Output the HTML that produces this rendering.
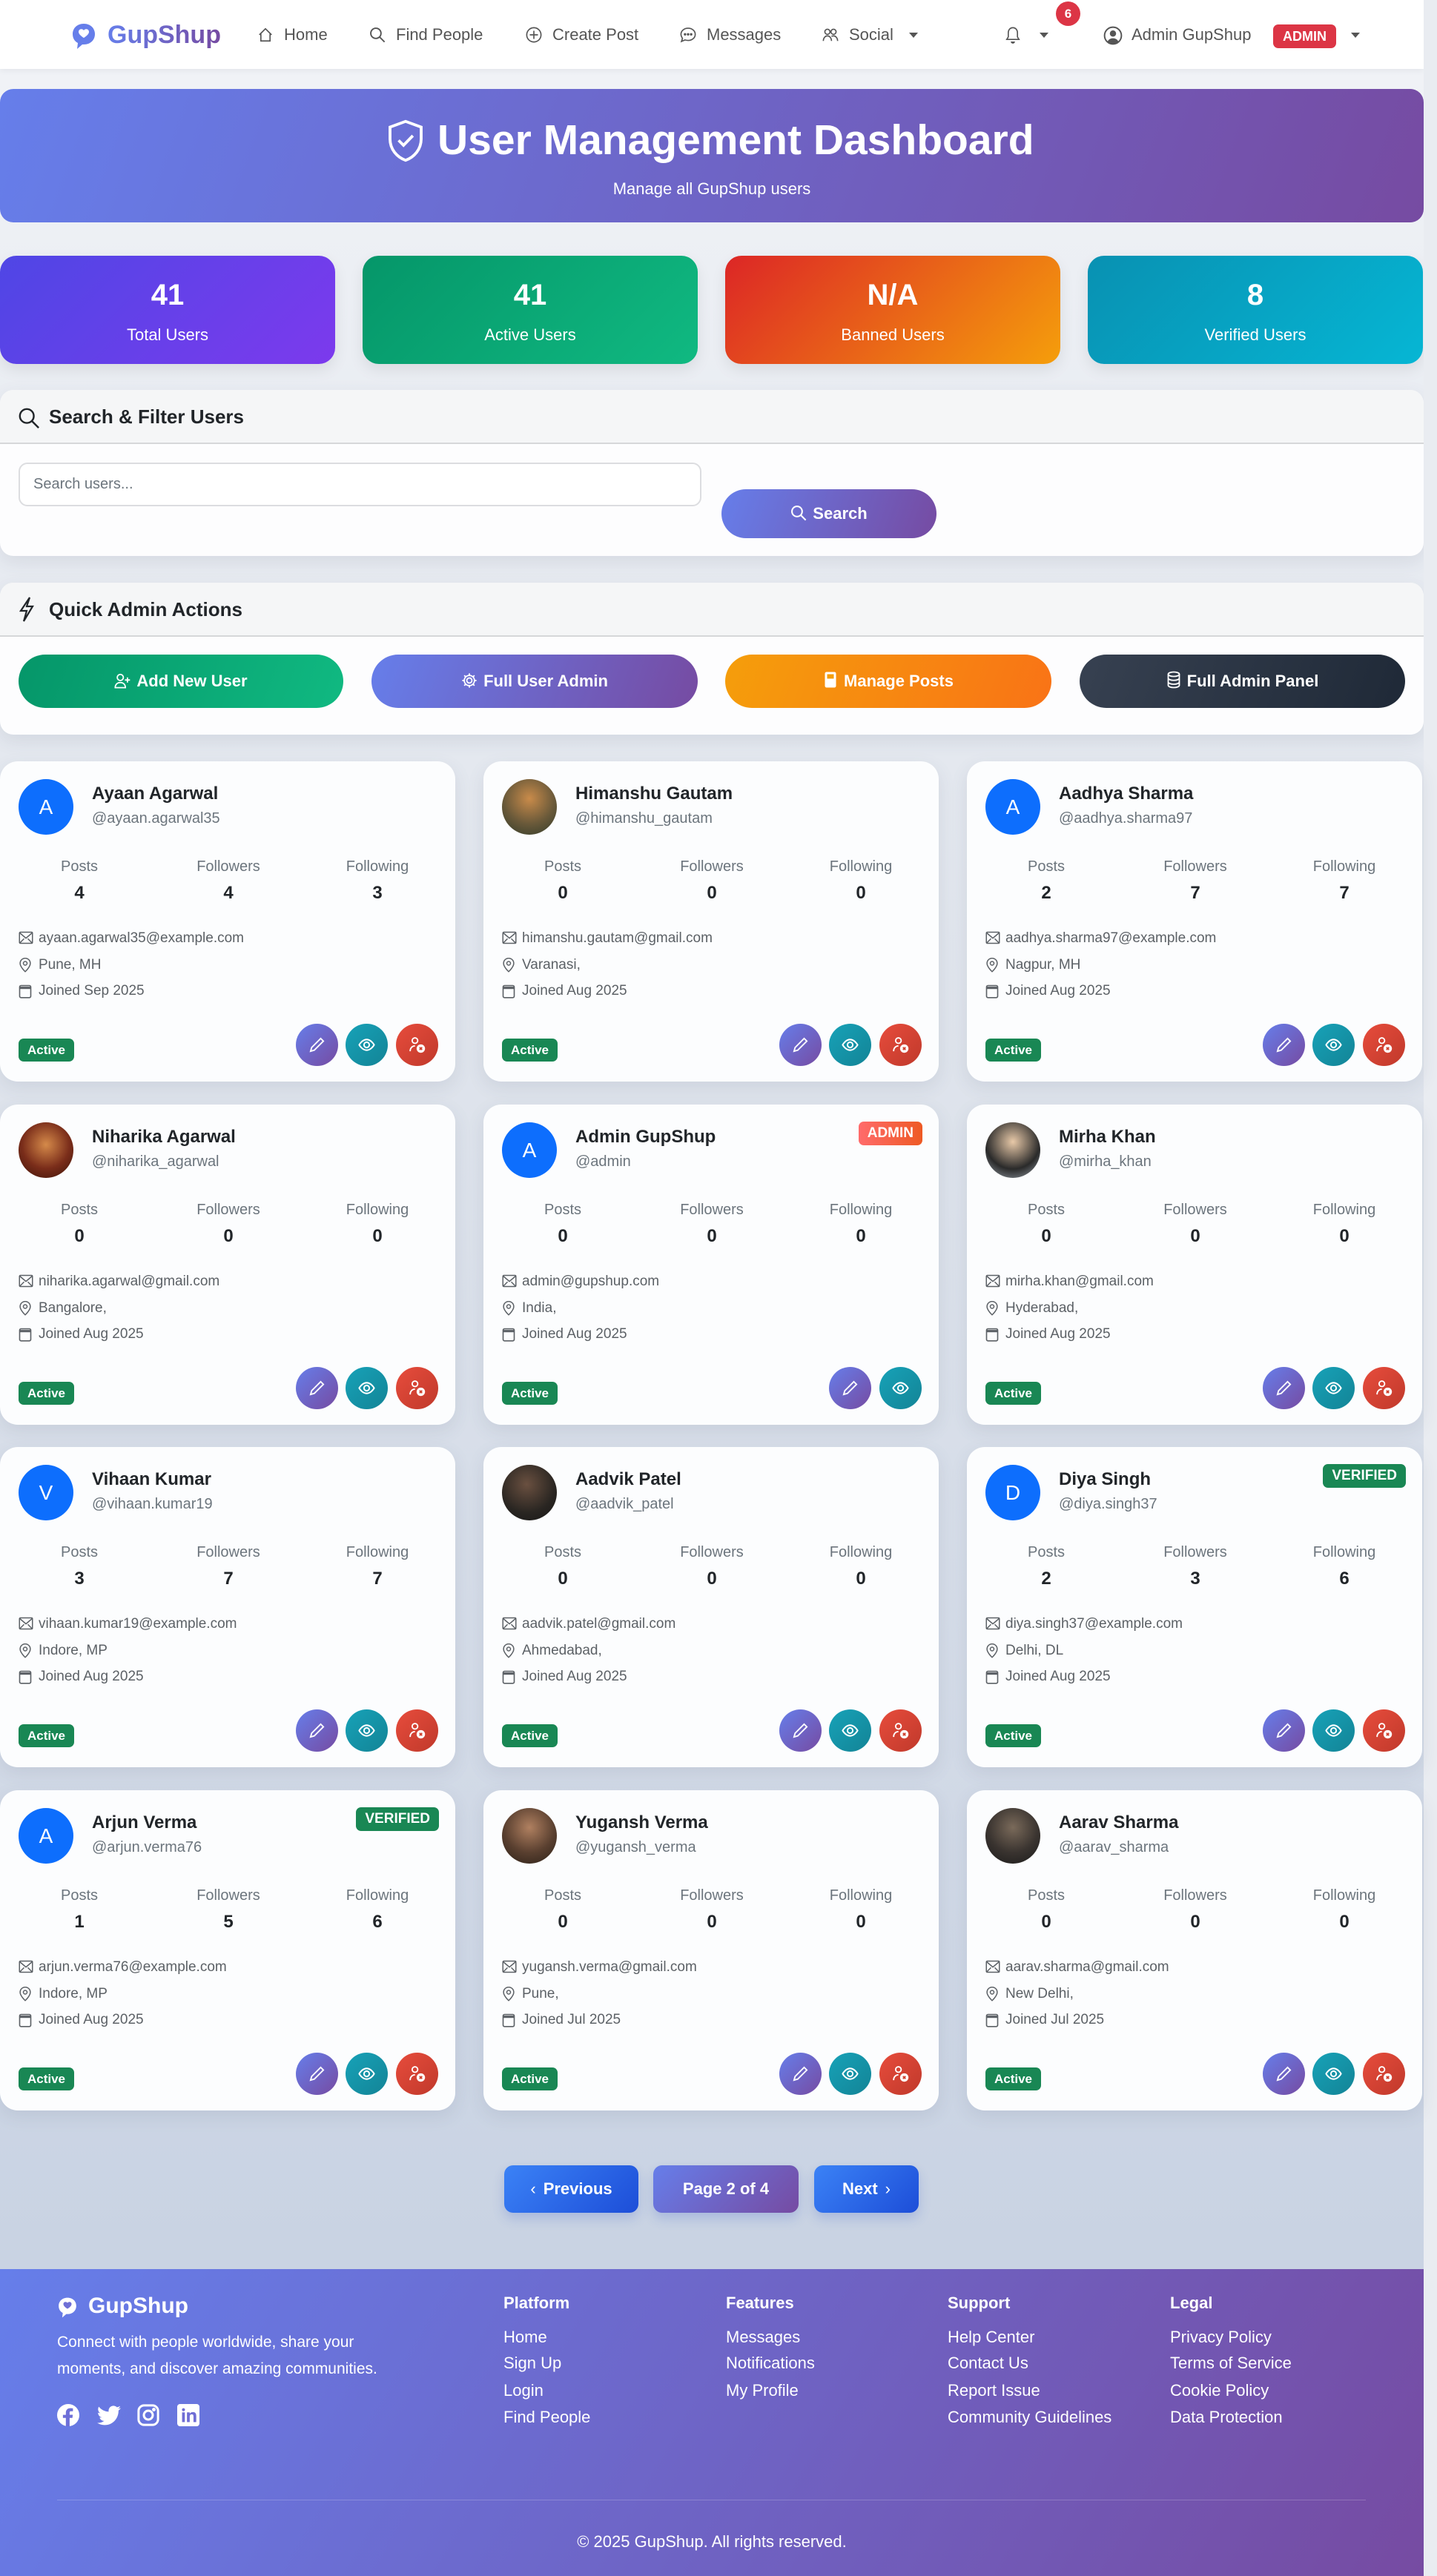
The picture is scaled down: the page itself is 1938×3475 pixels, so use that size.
<!DOCTYPE html>
<html><head><meta charset="utf-8">
<style>
*{box-sizing:border-box;margin:0;padding:0}
body{width:1938px;height:3475px;font-family:"Liberation Sans",sans-serif;background:#e4e8ef;position:relative;overflow:hidden}
#page{position:absolute;left:0;top:0;width:1920px;height:3475px;background:linear-gradient(180deg,#f1f3f7 0%,#dfe4ec 40%,#c9d3e3 87%);}
#strip{position:absolute;left:1920px;top:0;width:18px;height:3475px;background:#e9ecf1}
.abs{position:absolute}
nav{position:absolute;left:0;top:0;width:1920px;height:93px;background:#fff;box-shadow:0 2px 8px rgba(0,0,0,.06)}
.ni{position:absolute;top:33px;font-size:22px;color:#555;line-height:28px;white-space:nowrap}
.ni svg{position:absolute;left:-36px;top:3px}
.banner{left:0;top:120px;width:1920px;height:180px;border-radius:18px;background:linear-gradient(110deg,#667eea,#764ba2);color:#fff;text-align:center}
.stat{top:345px;width:452px;height:146px;border-radius:22px;color:#fff;text-align:center;box-shadow:0 8px 20px rgba(0,0,0,.08)}
.stat b{display:block;font-size:40px;margin-top:30px;line-height:46px}
.stat span{display:block;font-size:22px;margin-top:18px}
.panel{left:0;width:1920px;background:#fdfdfe;border-radius:18px;box-shadow:0 8px 24px rgba(60,70,100,.10);overflow:hidden}
.ph{height:73px;background:#f5f6f7;border-bottom:2px solid #d6d7d9;font-size:26px;font-weight:bold;color:#212529;line-height:73px;padding-left:66px;position:relative}
.qb{top:97px;height:72px;width:438px;border-radius:36px;color:#fff;font-size:22px;font-weight:bold;text-align:center;line-height:72px}
.card{position:absolute;width:614px;height:432px;background:#fcfdfe;border-radius:24px;box-shadow:0 8px 24px rgba(60,70,100,.10)}
.av{position:absolute;left:25px;top:24px;width:74px;height:75px;border-radius:50%;background:#0d6efd;color:#fff;font-size:28px;text-align:center;line-height:75px}
.nm{position:absolute;left:124px;top:30px;font-size:24px;font-weight:bold;color:#212529}
.un{position:absolute;left:124px;top:66px;font-size:20px;color:#6c757d}
.sl{position:absolute;top:131px;width:200px;margin-left:-100px;text-align:center;font-size:20px;color:#6c757d}
.sv{position:absolute;top:164px;width:200px;margin-left:-100px;text-align:center;font-size:24px;font-weight:bold;color:#212529}
.inf{position:absolute;left:52px;font-size:19px;color:#5c6166}
.inf svg{position:absolute;left:-27px;top:1px}
.act{position:absolute;left:25px;top:374px;width:75px;height:31px;border-radius:7px;background:#198754;color:#fff;font-weight:bold;font-size:17px;text-align:center;line-height:31px}
.cb{position:absolute;top:354px;width:57px;height:57px;border-radius:50%}
.cb svg{position:absolute;left:17px;top:17px}
.b1{background:linear-gradient(135deg,#667eea,#764ba2)}
.b2{background:linear-gradient(135deg,#17a2b8,#138496)}
.b3{background:linear-gradient(135deg,#e74c3c,#c0392b)}
.tag{position:absolute;top:23px;right:22px;height:32px;padding:0 12px;border-radius:7px;color:#fff;font-weight:bold;font-size:19px;line-height:32px}
.pg{top:2921px;height:64px;border-radius:12px;color:#fff;font-weight:bold;font-size:22px;line-height:64px;text-align:center;box-shadow:0 8px 16px rgba(40,80,200,.2)}
footer{position:absolute;left:0;top:3061px;width:1920px;height:414px;background:linear-gradient(120deg,#667eea,#764ba2);color:#fff}
.fh{position:absolute;top:33px;font-size:22px;font-weight:bold}
.fl{position:absolute;font-size:22px}
</style></head><body>
<div id="page">
<nav>
 <svg class="abs" style="left:96px;top:30px" width="34" height="38" viewBox="0 0 34 38"><path d="M17 2C8 2 2 8 2 16c0 6 3 10 7 12l-1 8 7-6h2c9 0 15-6 15-14S26 2 17 2z" fill="#667eea"/><path d="M17 11c-2-3-7-2-7 2 0 4 7 8 7 8s7-4 7-8c0-4-5-5-7-2z" fill="#fff"/></svg>
 <div class="abs" style="left:145px;top:28px;font-size:34px;font-weight:bold;background:linear-gradient(90deg,#667eea,#764ba2);-webkit-background-clip:text;color:transparent">GupShup</div>
 <div class="ni" style="left:383px"><svg width="22" height="22" viewBox="0 0 16 16" fill="none" stroke="#555" stroke-width="1.2"><path d="M2 8L8 2l6 6M3.5 6.5V14h9V6.5"/></svg>Home</div>
 <div class="ni" style="left:534px"><svg width="22" height="22" viewBox="0 0 16 16" fill="none" stroke="#555" stroke-width="1.4"><circle cx="6.5" cy="6.5" r="5"/><path d="M10 10l5 5"/></svg>Find People</div>
 <div class="ni" style="left:745px"><svg width="22" height="22" viewBox="0 0 16 16" fill="none" stroke="#555" stroke-width="1.2"><circle cx="8" cy="8" r="7"/><path d="M8 4v8M4 8h8"/></svg>Create Post</div>
 <div class="ni" style="left:953px"><svg width="22" height="22" viewBox="0 0 16 16" fill="none" stroke="#555" stroke-width="1.2"><path d="M8 1.5c4 0 7 2.7 7 6s-3 6-7 6c-1 0-2-.2-3-.5L1.5 14.5l1-3C1.8 10.3 1 9 1 7.5c0-3.3 3-6 7-6z"/><circle cx="5" cy="7.5" r=".6" fill="#555"/><circle cx="8" cy="7.5" r=".6" fill="#555"/><circle cx="11" cy="7.5" r=".6" fill="#555"/></svg>Messages</div>
 <div class="ni" style="left:1145px"><svg width="22" height="22" viewBox="0 0 16 16" fill="none" stroke="#555" stroke-width="1.2"><circle cx="5" cy="5" r="2.5"/><circle cx="11" cy="5" r="2.5"/><path d="M1 14c0-3 2-5 4-5s4 2 4 5M9 9.5c.6-.3 1.3-.5 2-.5 2 0 4 2 4 5"/></svg>Social</div>
 <div class="abs" style="left:1226px;top:44px;border:6px solid transparent;border-top:7px solid #555"></div>
 <svg class="abs" style="left:1355px;top:34px" width="22" height="26" viewBox="0 0 16 18" fill="none" stroke="#555" stroke-width="1.2"><path d="M8 2c-3 0-4.5 2.5-4.5 5v4L2 13.5h12L12.5 11V7C12.5 4.5 11 2 8 2z"/><path d="M6.5 15.5a1.5 1.5 0 003 0" fill="#555"/></svg>
 <div class="abs" style="left:1402px;top:44px;border:6px solid transparent;border-top:7px solid #555"></div>
 <div class="abs" style="left:1424px;top:2px;width:33px;height:33px;border-radius:50%;background:#dc3545;color:#fff;font-weight:bold;font-size:17px;text-align:center;line-height:33px">6</div>
 <svg class="abs" style="left:1488px;top:35px" width="26" height="26" viewBox="0 0 16 16"><circle cx="8" cy="8" r="7" fill="none" stroke="#555" stroke-width="1.2"/><circle cx="8" cy="6.3" r="2.6" fill="#555"/><path d="M3.5 12.8C4.5 11 6 10.2 8 10.2s3.5.8 4.5 2.6A6.5 6.5 0 013.5 12.8z" fill="#555"/></svg>
 <div class="ni" style="left:1526px">Admin GupShup</div>
 <div class="abs" style="left:1717px;top:33px;width:85px;height:32px;border-radius:7px;background:#dc3545;color:#fff;font-weight:bold;font-size:18px;text-align:center;line-height:32px">ADMIN</div>
 <div class="abs" style="left:1822px;top:44px;border:6px solid transparent;border-top:7px solid #555"></div>
</nav>

<div class="abs banner">
 <svg class="abs" style="left:519px;top:40px" width="56" height="60" viewBox="0 0 16 17" fill="none" stroke="#fff" stroke-width="1.1"><path d="M8 1L2 3.2v4.6c0 4 2.7 7 6 8.2 3.3-1.2 6-4.2 6-8.2V3.2z"/><path d="M5.3 8.3l1.9 1.9 3.6-3.7"/></svg>
 <div class="abs" style="left:590px;top:36px;font-size:57px;font-weight:bold;white-space:nowrap">User Management Dashboard</div>
 <div class="abs" style="left:0;width:1920px;top:122px;font-size:22px">Manage all GupShup users</div>
</div>

<div class="abs stat" style="left:0;background:linear-gradient(135deg,#4f46e5,#7c3aed)"><b>41</b><span>Total Users</span></div>
<div class="abs stat" style="left:489px;background:linear-gradient(135deg,#059669,#10b981)"><b>41</b><span>Active Users</span></div>
<div class="abs stat" style="left:978px;background:linear-gradient(135deg,#dc2626,#f59e0b)"><b>N/A</b><span>Banned Users</span></div>
<div class="abs stat" style="left:1467px;background:linear-gradient(135deg,#0891b2,#06b6d4)"><b>8</b><span>Verified Users</span></div>

<div class="abs panel" style="top:526px;height:224px">
 <div class="ph"><svg class="abs" style="left:24px;top:22px" width="30" height="32" viewBox="0 0 16 16" fill="none" stroke="#212529" stroke-width="1.3"><circle cx="6.5" cy="6.5" r="5"/><path d="M10 10l5 5"/></svg><span style="position:absolute;left:66px">Search &amp; Filter Users</span></div>
 <div class="abs" style="left:25px;top:98px;width:921px;height:59px;border:2px solid #dcdde0;border-radius:12px;background:#fff;font-size:20px;color:#6c757d;line-height:55px;padding-left:18px">Search users...</div>
 <div class="abs" style="left:973px;top:134px;width:290px;height:66px;border-radius:33px;background:linear-gradient(110deg,#667eea,#764ba2);color:#fff;font-weight:bold;font-size:22px;line-height:66px;text-align:center"><svg style="vertical-align:-3px;margin-right:8px" width="22" height="22" viewBox="0 0 16 16" fill="none" stroke="#fff" stroke-width="1.5"><circle cx="6.5" cy="6.5" r="5"/><path d="M10 10l5 5"/></svg>Search</div>
</div>

<div class="abs panel" style="top:786px;height:205px">
 <div class="ph"><svg class="abs" style="left:26px;top:18px" width="20" height="36" viewBox="0 0 10 18" fill="none" stroke="#212529" stroke-width="1.1"><path d="M7 1L1 10h4l-2 7 6-10H5z"/></svg><span style="position:absolute;left:66px">Quick Admin Actions</span></div>
 <div class="abs qb" style="left:25px;background:linear-gradient(110deg,#059669,#10b981)"><svg style="vertical-align:-3px;margin-right:8px" width="22" height="22" viewBox="0 0 16 16" fill="none" stroke="#fff" stroke-width="1.3"><circle cx="6" cy="5" r="3"/><path d="M1 15c0-3 2-5 5-5s5 2 5 5zM13 5v5M10.5 7.5h5"/></svg>Add New User</div>
 <div class="abs qb" style="left:501px;width:440px;background:linear-gradient(110deg,#667eea,#764ba2)"><svg style="vertical-align:-3px;margin-right:8px" width="22" height="22" viewBox="0 0 16 16" fill="none" stroke="#fff" stroke-width="1.3"><circle cx="8" cy="8" r="2.5"/><path d="M8 1v2M8 13v2M1 8h2M13 8h2M3 3l1.5 1.5M11.5 11.5L13 13M3 13l1.5-1.5M11.5 4.5L13 3"/><circle cx="8" cy="8" r="5"/></svg>Full User Admin</div>
 <div class="abs qb" style="left:978px;width:440px;background:linear-gradient(110deg,#f59e0b,#f97316)"><svg style="vertical-align:-3px;margin-right:8px" width="20" height="24" viewBox="0 0 12 16"><rect x="1" y="1" width="10" height="14" rx="1.5" fill="#fff"/><rect x="3" y="3" width="6" height="4" fill="#f59e0b"/></svg>Manage Posts</div>
 <div class="abs qb" style="left:1456px;width:439px;background:linear-gradient(110deg,#374151,#1f2937)"><svg style="vertical-align:-3px;margin-right:8px" width="20" height="24" viewBox="0 0 12 16" fill="none" stroke="#fff" stroke-width="1.2"><ellipse cx="6" cy="3" rx="5" ry="2"/><path d="M1 3v10c0 1.1 2.2 2 5 2s5-.9 5-2V3M1 6.5c0 1.1 2.2 2 5 2s5-.9 5-2M1 10c0 1.1 2.2 2 5 2s5-.9 5-2"/></svg>Full Admin Panel</div>
</div>

<div class="abs pg" style="left:680px;width:181px;background:linear-gradient(135deg,#3b82f6,#1d4ed8)"><span style="font-weight:normal;margin-right:10px">&#x2039;</span>Previous</div>
<div class="abs pg" style="left:881px;width:196px;background:linear-gradient(135deg,#667eea,#764ba2)">Page 2 of 4</div>
<div class="abs pg" style="left:1098px;width:141px;background:linear-gradient(135deg,#3b82f6,#1d4ed8)">Next<span style="font-weight:normal;margin-left:10px">&#x203A;</span></div>

<footer>
 <svg class="abs" style="left:77px;top:37px" width="28" height="30" viewBox="0 0 34 38"><path d="M17 2C8 2 2 8 2 16c0 6 3 10 7 12l-1 8 7-6h2c9 0 15-6 15-14S26 2 17 2z" fill="#fff"/><path d="M17 11c-2-3-7-2-7 2 0 4 7 8 7 8s7-4 7-8c0-4-5-5-7-2z" fill="#6f6fd6"/></svg>
 <div class="abs" style="left:119px;top:33px;font-size:30px;font-weight:bold">GupShup</div>
 <div class="abs" style="left:77px;top:81px;font-size:21px;line-height:36px;white-space:nowrap">Connect with people worldwide, share your<br>moments, and discover amazing communities.</div>
 <svg class="abs" style="left:77px;top:182px" width="30" height="30" viewBox="0 0 16 16"><circle cx="8" cy="8" r="8" fill="#fff"/><path d="M9 16V10h2l.3-2.3H9V6.3c0-.7.2-1.1 1.1-1.1h1.3V3.1c-.2 0-1-.1-1.9-.1-1.9 0-3.2 1.2-3.2 3.3v1.5H4.2V10h2.1v6z" fill="#6d6fd8"/></svg>
 <svg class="abs" style="left:131px;top:184px" width="32" height="28" viewBox="0 0 16 14"><path d="M16 1.7c-.6.3-1.2.4-1.9.5.7-.4 1.2-1 1.4-1.8-.6.4-1.300.6-2.1.8A3.3 3.3 0 007.8 4.2 9.3 9.3 0 011.1.8a3.3 3.3 0 001 4.4c-.5 0-1-.2-1.5-.4 0 1.6 1.1 2.9 2.6 3.2-.5.1-1 .2-1.5.1.4 1.3 1.6 2.3 3.1 2.3A6.6 6.6 0 010 11.7 9.3 9.3 0 005 13.2c6 0 9.4-5 9.4-9.4v-.4c.6-.5 1.2-1 1.6-1.7z" fill="#fff"/></svg>
 <svg class="abs" style="left:185px;top:182px" width="30" height="30" viewBox="0 0 16 16" fill="none" stroke="#fff" stroke-width="1.6"><rect x="1" y="1" width="14" height="14" rx="4"/><circle cx="8" cy="8" r="3.2"/><circle cx="12" cy="4" r=".5" fill="#fff"/></svg>
 <svg class="abs" style="left:239px;top:182px" width="30" height="30" viewBox="0 0 16 16"><rect width="16" height="16" rx="2" fill="#fff"/><path d="M3.5 6h2v7h-2zM4.5 3a1.1 1.1 0 110 2.2 1.1 1.1 0 010-2.2zM7 6h2v1c.4-.7 1.2-1.2 2.3-1.2 2 0 2.4 1.3 2.4 3V13h-2V9.3c0-.9 0-1.9-1.2-1.9S9 8.3 9 9.2V13H7z" fill="#6f6dd5"/></svg>
 <div class="fh" style="left:679px">Platform</div><div class="fh" style="left:979px">Features</div><div class="fh" style="left:1278px">Support</div><div class="fh" style="left:1578px">Legal</div>
 <div class="fl" style="left:679px;top:79px">Home</div><div class="fl" style="left:679px;top:114px">Sign Up</div><div class="fl" style="left:679px;top:151px">Login</div><div class="fl" style="left:679px;top:187px">Find People</div>
 <div class="fl" style="left:979px;top:79px">Messages</div><div class="fl" style="left:979px;top:114px">Notifications</div><div class="fl" style="left:979px;top:151px">My Profile</div>
 <div class="fl" style="left:1278px;top:79px">Help Center</div><div class="fl" style="left:1278px;top:114px">Contact Us</div><div class="fl" style="left:1278px;top:151px">Report Issue</div><div class="fl" style="left:1278px;top:187px">Community Guidelines</div>
 <div class="fl" style="left:1578px;top:79px">Privacy Policy</div><div class="fl" style="left:1578px;top:114px">Terms of Service</div><div class="fl" style="left:1578px;top:151px">Cookie Policy</div><div class="fl" style="left:1578px;top:187px">Data Protection</div>
 <div class="abs" style="left:77px;top:311px;width:1765px;height:1px;background:rgba(255,255,255,.2)"></div>
 <div class="abs" style="left:0;width:1920px;top:355px;text-align:center;font-size:22px">© 2025 GupShup. All rights reserved.</div>
</footer>
</div>
<div id="strip"></div>

<div style="position:absolute;left:0;top:0">
<div class="card" style="left:0;top:1027px"><div class="av">A</div><div class="nm">Ayaan Agarwal</div><div class="un">@ayaan.agarwal35</div><div class="sl" style="left:107px">Posts</div><div class="sl" style="left:308px">Followers</div><div class="sl" style="left:509px">Following</div><div class="sv" style="left:107px">4</div><div class="sv" style="left:308px">4</div><div class="sv" style="left:509px">3</div><div class="inf" style="top:228px"><svg width="20" height="18" viewBox="0 0 16 14" fill="none" stroke="#5c6166" stroke-width="1.2"><rect x="1" y="1" width="14" height="12" rx="1"/><path d="M1 1.5l7 6 7-6M1 13l5-5M15 13l-5-5"/></svg>ayaan.agarwal35@example.com</div><div class="inf" style="top:264px"><svg width="18" height="20" viewBox="0 0 14 16" fill="none" stroke="#5c6166" stroke-width="1.2"><path d="M7 15s5.5-5 5.5-9A5.5 5.5 0 001.5 6c0 4 5.5 9 5.5 9z"/><circle cx="7" cy="6" r="2"/></svg>Pune, MH</div><div class="inf" style="top:299px"><svg width="18" height="20" viewBox="0 0 14 16" fill="none" stroke="#5c6166" stroke-width="1.3"><rect x="1" y="2" width="12" height="13" rx="1.5"/><path d="M1 4.5h12" stroke-width="2.5"/></svg>Joined Sep 2025</div><div class="act">Active</div><div class="cb b1" style="left:399px"><svg width="23" height="23" viewBox="0 0 16 16" fill="none" stroke="#fff" stroke-width="1.3"><path d="M11.5 2l2.5 2.5L5.5 13 2 14l1-3.5z"/></svg></div><div class="cb b2" style="left:466px"><svg width="23" height="23" viewBox="0 0 16 16" fill="none" stroke="#fff" stroke-width="1.4"><path d="M1 8s2.7-5 7-5 7 5 7 5-2.7 5-7 5-7-5-7-5z"/><circle cx="8" cy="8" r="2.5"/></svg></div><div class="cb b3" style="left:534px"><svg width="23" height="23" viewBox="0 0 16 16" fill="none" stroke="#fff" stroke-width="1.3"><circle cx="6" cy="4" r="2.6"/><path d="M1.5 14c0-3 2-5 4.5-5"/><circle cx="11.5" cy="11.5" r="3.3" fill="#fff"/><path d="M10.3 10.3l2.4 2.4M12.7 10.3l-2.4 2.4" stroke="#d04432"/></svg></div></div>
</div>

<script>
(function(){
var data=[
["Ayaan Agarwal","@ayaan.agarwal35","4","4","3","ayaan.agarwal35@example.com","Pune, MH","Joined Sep 2025","A","",3],
["Himanshu Gautam","@himanshu_gautam","0","0","0","himanshu.gautam@gmail.com","Varanasi,","Joined Aug 2025","p1","",3],
["Aadhya Sharma","@aadhya.sharma97","2","7","7","aadhya.sharma97@example.com","Nagpur, MH","Joined Aug 2025","A","",3],
["Niharika Agarwal","@niharika_agarwal","0","0","0","niharika.agarwal@gmail.com","Bangalore,","Joined Aug 2025","p2","",3],
["Admin GupShup","@admin","0","0","0","admin@gupshup.com","India,","Joined Aug 2025","A","admin",2],
["Mirha Khan","@mirha_khan","0","0","0","mirha.khan@gmail.com","Hyderabad,","Joined Aug 2025","p3","",3],
["Vihaan Kumar","@vihaan.kumar19","3","7","7","vihaan.kumar19@example.com","Indore, MP","Joined Aug 2025","V","",3],
["Aadvik Patel","@aadvik_patel","0","0","0","aadvik.patel@gmail.com","Ahmedabad,","Joined Aug 2025","p4","",3],
["Diya Singh","@diya.singh37","2","3","6","diya.singh37@example.com","Delhi, DL","Joined Aug 2025","D","ver",3],
["Arjun Verma","@arjun.verma76","1","5","6","arjun.verma76@example.com","Indore, MP","Joined Aug 2025","A","ver",3],
["Yugansh Verma","@yugansh_verma","0","0","0","yugansh.verma@gmail.com","Pune,","Joined Jul 2025","p5","",3],
["Aarav Sharma","@aarav_sharma","0","0","0","aarav.sharma@gmail.com","New Delhi,","Joined Jul 2025","p6","",3]];
var photo={p1:"radial-gradient(circle at 50% 35%,#c98b4a,#6b5a3a 55%,#2f3b2a)",p2:"radial-gradient(circle at 50% 40%,#d58a4a,#7a2d1a 55%,#3a1208)",p3:"radial-gradient(circle at 50% 35%,#e8c9a8,#2a2a2a 60%,#9aa3ad)",p4:"radial-gradient(circle at 45% 35%,#6a5040,#2a2622 60%,#151515)",p5:"radial-gradient(circle at 50% 35%,#b08060,#5a4030 55%,#2a2018)",p6:"radial-gradient(circle at 50% 35%,#7a6a5a,#3a3430 55%,#1a1a1a)"};
var tpl=document.querySelector('.card').outerHTML;
var wrap=document.querySelector('.card').parentNode;
wrap.innerHTML='';
var xs=[0,652,1304],ys=[1027,1490,1952,2415];
data.forEach(function(d,i){
 var t=document.createElement('div');t.innerHTML=tpl;var c=t.firstChild;
 c.style.left=xs[i%3]+'px';c.style.top=ys[Math.floor(i/3)]+'px';
 var av=c.querySelector('.av');
 if(d[8].length>1){av.textContent='';av.style.background=photo[d[8]];}else av.textContent=d[8];
 c.querySelector('.nm').textContent=d[0];c.querySelector('.un').textContent=d[1];
 var sv=c.querySelectorAll('.sv');sv[0].textContent=d[2];sv[1].textContent=d[3];sv[2].textContent=d[4];
 var inf=c.querySelectorAll('.inf');
 [5,6,7].forEach(function(k,j){var s=inf[j].querySelector('svg');inf[j].textContent=d[k];inf[j].insertBefore(s,inf[j].firstChild);});
 var cbs=c.querySelectorAll('.cb');
 if(d[10]==2){cbs[2].remove();cbs[0].style.left='466px';cbs[1].style.left='534px';}
 if(d[9]){var g=document.createElement('div');g.className='tag';
  if(d[9]=='admin'){g.textContent='ADMIN';g.style.background='linear-gradient(90deg,#ff6b6b,#ee5a24)';}
  else{g.textContent='VERIFIED';g.style.background='#198754';}
  c.appendChild(g);}
 wrap.appendChild(c);
});
})();
</script>
</body></html>
